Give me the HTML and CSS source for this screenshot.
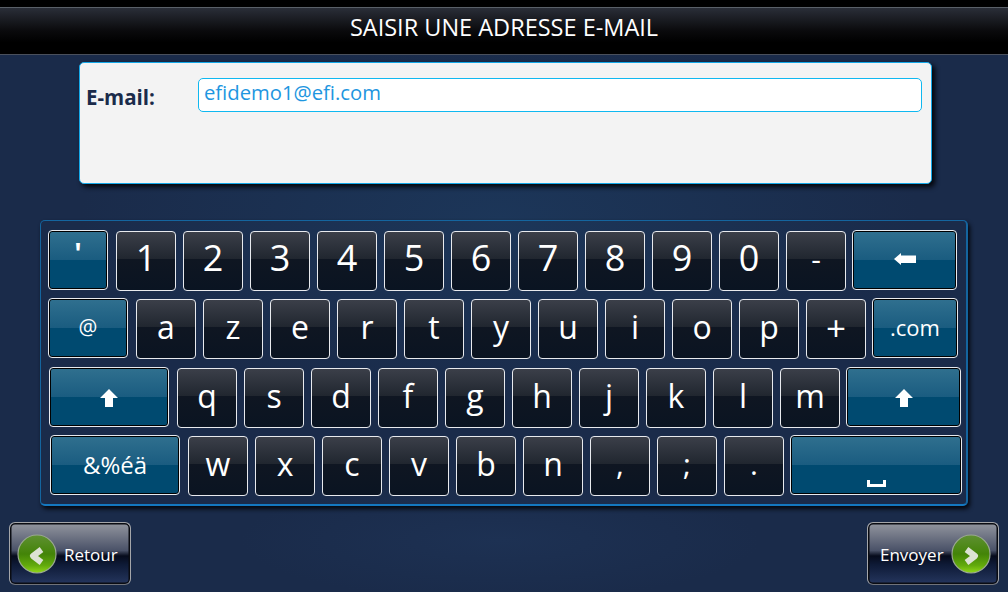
FILE: index.html
```html
<!DOCTYPE html>
<html lang="fr">
<head>
    <meta charset="UTF-8">
    <title>Saisir une adresse e-mail</title>
    <link rel="stylesheet" href="styles.css">
</head>
<body>
    <div class="header"><h1>SAISIR UNE ADRESSE E-MAIL</h1></div>

    <div class="panel">
        <label class="panel-label">E-mail:</label>
        <div class="email-input">efidemo1@efi.com</div>
    </div>

    <div class="keyboard">
        <div class="row row-1">
            <div class="key blue quote">'</div>
            <div class="key digit">1</div><div class="key digit">2</div><div class="key digit">3</div><div class="key digit">4</div><div class="key digit">5</div>
            <div class="key digit">6</div><div class="key digit">7</div><div class="key digit">8</div><div class="key digit">9</div><div class="key digit">0</div>
            <div class="key small">-</div>
            <div class="key blue backspace">
                <svg width="22" height="12" viewBox="0 0 22 12"><path d="M0 6 L7 0 V2.5 H22 V10 H7 V12 Z" fill="#fff"/></svg>
            </div>
        </div>
        <div class="row row-2">
            <div class="key blue at">@</div>
            <div class="key">a</div><div class="key">z</div><div class="key">e</div><div class="key">r</div><div class="key">t</div>
            <div class="key">y</div><div class="key">u</div><div class="key">i</div><div class="key">o</div><div class="key">p</div>
            <div class="key plus">+</div>
            <div class="key blue dotcom">.com</div>
        </div>
        <div class="row row-3">
            <div class="key blue shift-left">
                <svg width="18" height="18" viewBox="0 0 18 18"><path d="M9 0 L18 9 H13 V18 H5 V9 H0 Z" fill="#fff"/></svg>
            </div>
            <div class="key">q</div><div class="key">s</div><div class="key">d</div><div class="key">f</div><div class="key">g</div>
            <div class="key">h</div><div class="key">j</div><div class="key">k</div><div class="key">l</div><div class="key">m</div>
            <div class="key blue shift-right">
                <svg width="18" height="18" viewBox="0 0 18 18"><path d="M9 0 L18 9 H13 V18 H5 V9 H0 Z" fill="#fff"/></svg>
            </div>
        </div>
        <div class="row row-4">
            <div class="key blue symbols">&amp;%éä</div>
            <div class="key">w</div><div class="key">x</div><div class="key">c</div><div class="key">v</div><div class="key">b</div>
            <div class="key">n</div><div class="key small">,</div><div class="key small">;</div><div class="key small">.</div>
            <div class="key blue space">
                <svg width="19" height="7" viewBox="0 0 19 7"><path d="M0 0 H3 V4 H16 V0 H19 V7 H0 Z" fill="#fff"/></svg>
            </div>
        </div>
    </div>

    <div class="footer">
        <div class="nav-btn back">
            <svg class="orb" width="40" height="40" viewBox="0 0 40 40">
                <defs>
                    <linearGradient id="orbBack" x1="0" y1="0" x2="0" y2="1">
                        <stop offset="0" stop-color="#5f9032"/>
                        <stop offset="0.5" stop-color="#438408"/>
                        <stop offset="0.8" stop-color="#62aa0c"/>
                        <stop offset="1" stop-color="#92d81a"/>
                    </linearGradient>
                </defs>
                <circle cx="20" cy="20" r="19" fill="url(#orbBack)" stroke="#9aa892" stroke-width="1.2"/>
                <path d="M24.5 15.5 L16 22 L24.5 28.5" fill="none" stroke="#dce2d4" stroke-width="6" stroke-linejoin="round"/>
            </svg>
            <span>Retour</span>
        </div>
        <div class="nav-btn next">
            <span>Envoyer</span>
            <svg class="orb" width="40" height="40" viewBox="0 0 40 40">
                <defs>
                    <linearGradient id="orbNext" x1="0" y1="0" x2="0" y2="1">
                        <stop offset="0" stop-color="#5f9032"/>
                        <stop offset="0.5" stop-color="#438408"/>
                        <stop offset="0.8" stop-color="#62aa0c"/>
                        <stop offset="1" stop-color="#92d81a"/>
                    </linearGradient>
                </defs>
                <circle cx="20" cy="20" r="19" fill="url(#orbNext)" stroke="#9aa892" stroke-width="1.2"/>
                <path d="M15.5 15.5 L24 22 L15.5 28.5" fill="none" stroke="#dce2d4" stroke-width="6" stroke-linejoin="round"/>
            </svg>
        </div>
    </div>
</body>
</html>
```

FILE: styles.css
```css
html, body {
    height: 100%;
}
body {
    margin: 0;
    padding-top: 7px;
    box-sizing: border-box;
    overflow: hidden;
    font-family: "Open Sans", "Noto Sans", sans-serif;
    color: #fff;
    background-color: #1a2b4a;
    background-image:
        radial-gradient(ellipse 420px 190px at 500px 220px, #1c3659 0%, rgba(26, 43, 74, 0) 100%),
        radial-gradient(ellipse 260px 60px at 500px 540px, #1d3153 0%, rgba(26, 43, 74, 0) 100%);
}
body::before {
    content: "";
    position: absolute;
    top: 0;
    left: 0;
    right: 0;
    height: 7px;
    background: #000;
}
.header {
    height: 48px;
    box-sizing: border-box;
    border-top: 1px solid #5a6068;
    border-bottom: 1px solid #4a505c;
    background: linear-gradient(#2a2e38 0%, #0a0a0c 50%, #000 75%, #000 100%);
    text-align: center;
}
.header h1 {
    margin: 0;
    font-size: 23.5px;
    font-weight: 400;
    line-height: 39px;
}
.panel {
    width: 853px;
    height: 122px;
    box-sizing: border-box;
    margin: 7px 0 0 79px;
    padding: 15px 9px 0 6px;
    display: flex;
    align-items: flex-start;
    background: #f3f3f3;
    border: 1px solid #14a8e8;
    border-radius: 5px;
    box-shadow: 3px 3px 5px #03050a;
}
.panel-label {
    width: 112px;
    margin-top: 5px;
    font-size: 20.5px;
    font-weight: 700;
    color: #1a2b4a;
}
.email-input {
    flex: 1;
    height: 34px;
    box-sizing: border-box;
    padding-left: 5px;
    background: #fff;
    border: 1px solid #0fb8f0;
    border-radius: 5px;
    font-size: 20.25px;
    line-height: 27px;
    color: #1e96e0;
}
.keyboard {
    width: 928px;
    height: 286px;
    box-sizing: border-box;
    margin: 36px 0 0 40px;
    padding-top: 10px;
    border: 1px solid #14659f;
    border-width: 1px 2px 2px 1px;
    border-bottom-color: #1478c0;
    border-radius: 5px;
    box-shadow: 2px 3px 4px #05080f;
}
.row {
    display: flex;
    gap: 7px;
    height: 60px;
    margin-bottom: 8px;
}
.row-1 { padding-left: 7px; }
.row-2 { padding-left: 7px; }
.row-3 { padding-left: 8px; margin-top: 9px; }
.row-4 { padding-left: 9px; }
.key {
    width: 60px;
    height: 60px;
    box-sizing: border-box;
    flex: none;
    display: flex;
    align-items: center;
    justify-content: center;
    border: 1px solid #e8eaee;
    border-radius: 4px;
    background: linear-gradient(#3b3f49 0%, #20262f 47%, #0f1622 47%, #0a1422 100%);
    font-size: 32px;
    line-height: 1;
    padding-bottom: 4px;
}
.key.digit {
    font-size: 36px;
    padding-bottom: 6px;
}
.key.small {
    font-size: 30px;
    padding-bottom: 4px;
}
.key.plus {
    font-size: 35px;
}
.key.blue {
    margin-top: -1px;
    box-shadow: inset 0 0 0 1px #000;
    background: linear-gradient(#30708f 0%, #1a5c80 50%, #004a70 50%, #004a70 100%);
    font-size: 21px;
    padding-bottom: 2px;
}
.key.quote {
    align-items: flex-start;
    font-size: 28px;
    font-weight: 700;
    padding: 8px 0 0;
    margin-right: 1px;
}
.key.at { width: 80px; margin-right: 1px; }
.key.backspace { width: 105px; margin-left: -1px; padding-bottom: 3px; }
.key.dotcom { width: 86px; margin-left: -1px; font-size: 22px; }
.key.shift-left { width: 120px; margin-right: 1px; padding: 2px 0 0; }
.key.shift-right { width: 115px; margin-left: -1px; padding: 2px 0 0; }
.key.symbols { width: 130px; margin-right: 1px; font-size: 24px; padding-bottom: 0; }
.key.space { width: 172px; margin-left: -1px; align-items: flex-end; padding-bottom: 7px; }
.footer {
    display: flex;
    justify-content: space-between;
    padding: 16px 9px 0;
}
.nav-btn {
    height: 63px;
    box-sizing: border-box;
    display: flex;
    align-items: center;
    gap: 7px;
    border: 1px solid #a4a6aa;
    border-bottom-color: #70737a;
    border-radius: 6px;
    box-shadow: inset 0 0 0 1.5px #0a0c12;
    background: linear-gradient(#93969f 0%, #4a5268 45%, #060b1c 54%, #0e1a36 68%, #25365e 100%);
    font-size: 17px;
}
.nav-btn span {
    padding-top: 2px;
}
.back { width: 122px; padding-left: 7px; }
.next { width: 132px; padding-left: 12px; }
```
